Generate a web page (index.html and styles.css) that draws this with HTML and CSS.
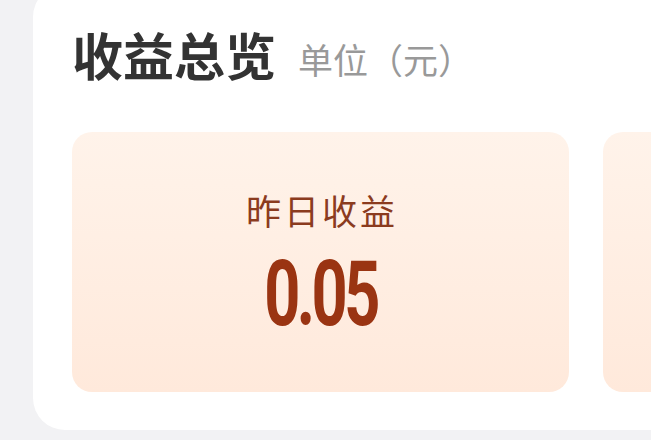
FILE: index.html
```html
<!DOCTYPE html>
<html lang="zh">
<head>
<meta charset="utf-8">
<title>收益总览</title>
<link rel="stylesheet" href="styles.css">
</head>
<body>
<div class="panel">
  <div class="head">
    <h1 class="title">收益总览</h1>
    <span class="unit">单位（元）</span>
  </div>
  <div class="cards">
    <div class="card">
      <div class="label">昨日收益</div>
      <div class="value"><span class="num">0.05</span></div>
    </div>
    <div class="card"></div>
  </div>
</div>
</body>
</html>
```

FILE: styles.css
```css
html, body {
  margin: 0;
  padding: 0;
}
body {
  width: 651px;
  height: 440px;
  overflow: hidden;
  background: #f2f2f4;
  font-family: "Noto Sans CJK SC", "Noto Sans", sans-serif;
}
.panel {
  margin-top: -15px;
  margin-left: 33px;
  width: 1200px;
  background: #ffffff;
  border-radius: 32px;
  padding: 42px 0 38px 39px;
  box-sizing: border-box;
}
.head {
  display: flex;
  align-items: center;
  height: 54px;
}
.title {
  margin: 0;
  font-size: 51px;
  line-height: 54px;
  font-weight: 700;
  color: #333333;
}
.unit {
  margin-left: 22px;
  font-size: 35px;
  line-height: 40px;
  color: #999999;
  position: relative;
  top: 5px;
}
.cards {
  display: flex;
  gap: 34px;
  margin-top: 51px;
}
.card {
  flex: none;
  width: 497px;
  height: 260px;
  box-sizing: border-box;
  padding-bottom: 3px;
  border-radius: 20px;
  background: linear-gradient(180deg, #fff3ea 0%, #ffe9db 100%);
  display: flex;
  flex-direction: column;
  align-items: center;
  justify-content: center;
}
.label {
  font-size: 35px;
  line-height: 40px;
  letter-spacing: 3px;
  margin-right: -3px;
  color: #8b3b1e;
}
.value {
  margin-top: 28px;
  height: 74px;
  display: flex;
  align-items: center;
  justify-content: center;
  overflow: visible;
}
.num {
  display: block;
  font-family: Roboto, "Liberation Sans", sans-serif;
  font-weight: 700;
  font-size: 90px;
  line-height: 74px;
  height: 74px;
  letter-spacing: -5px;
  color: #9a3412;
  transform: scaleX(0.7);
}
```
